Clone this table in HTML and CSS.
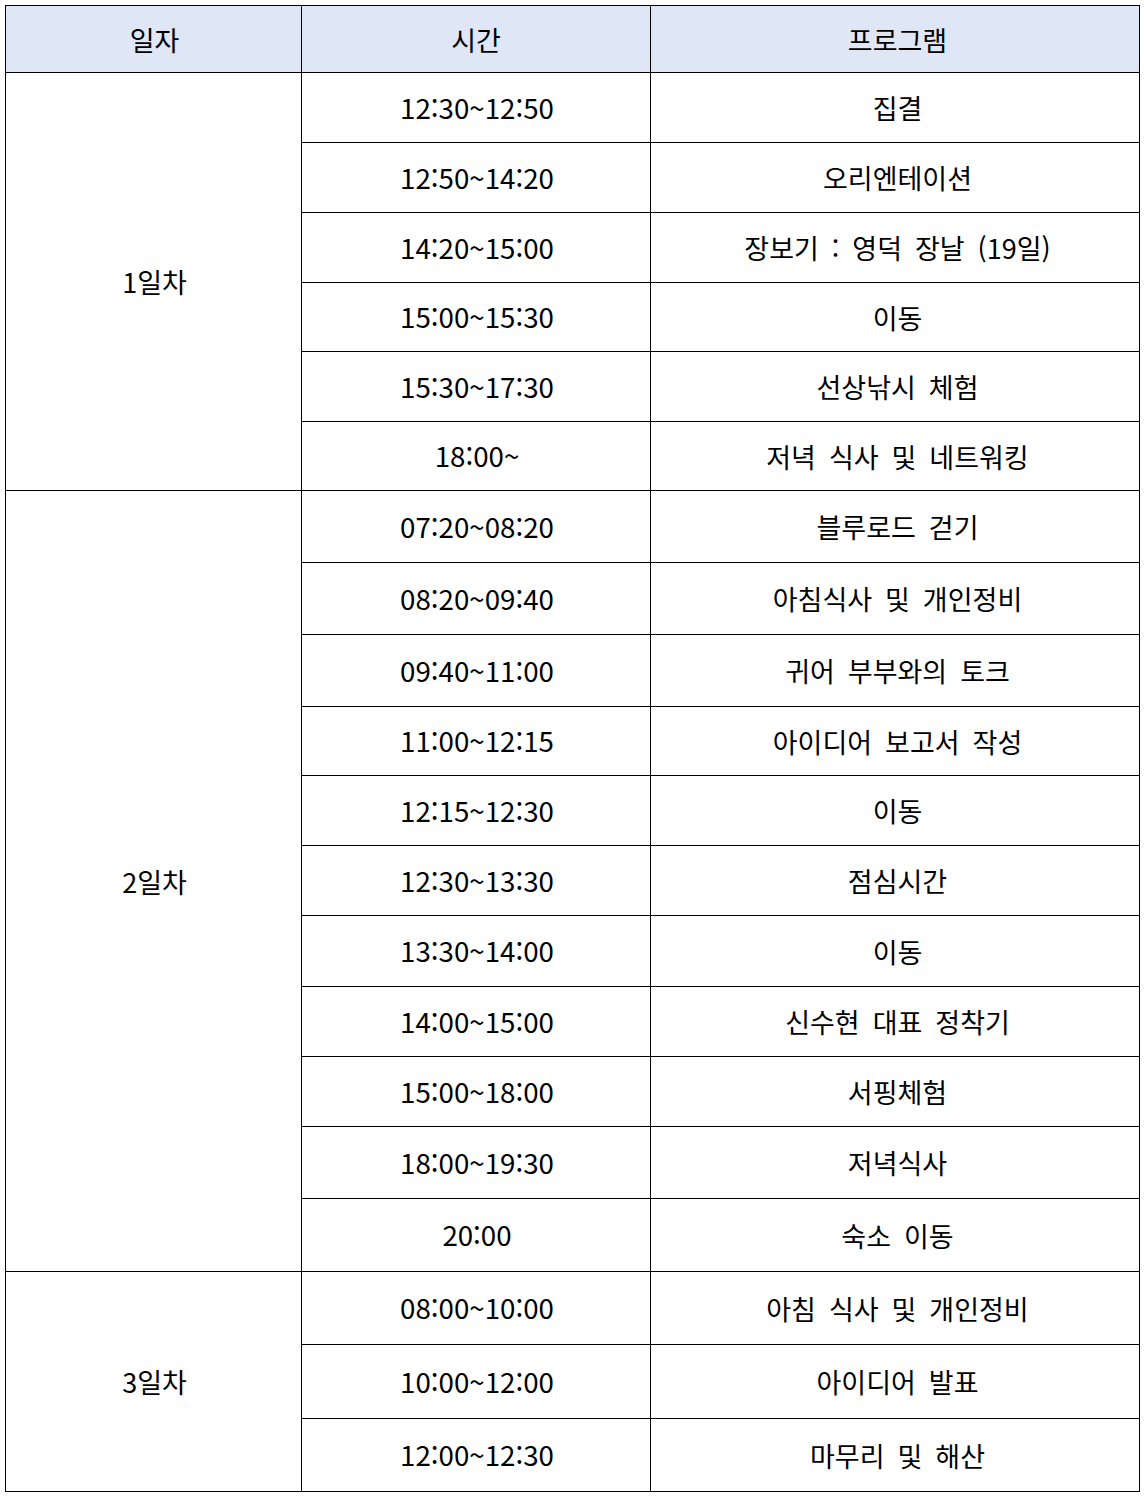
FILE: index.html
```html
<!DOCTYPE html>
<html lang="ko">
<head>
<meta charset="utf-8">
<title>일정표</title>
<link rel="stylesheet" href="styles.css">
</head>
<body>
<table class="schedule">
  <colgroup>
    <col class="c-day">
    <col class="c-time">
    <col class="c-prog">
  </colgroup>
  <thead>
    <tr class="r-head"><th class="day">일자</th><th class="time">시간</th><th class="prog">프로그램</th></tr>
  </thead>
  <tbody>
    <tr class="r70"><td class="day" rowspan="6">1일차</td><td class="time">12:30~12:50</td><td class="prog">집결</td></tr>
    <tr class="r70"><td class="time">12:50~14:20</td><td class="prog">오리엔테이션</td></tr>
    <tr class="r70"><td class="time">14:20~15:00</td><td class="prog">장보기 : 영덕 장날 (19일)</td></tr>
    <tr class="r69"><td class="time">15:00~15:30</td><td class="prog">이동</td></tr>
    <tr class="r70"><td class="time">15:30~17:30</td><td class="prog">선상낚시 체험</td></tr>
    <tr class="r69"><td class="time">18:00~</td><td class="prog">저녁 식사 및 네트워킹</td></tr>

    <tr class="r72"><td class="day" rowspan="11">2일차</td><td class="time">07:20~08:20</td><td class="prog">블루로드 걷기</td></tr>
    <tr class="r72"><td class="time">08:20~09:40</td><td class="prog">아침식사 및 개인정비</td></tr>
    <tr class="r72"><td class="time">09:40~11:00</td><td class="prog">귀어 부부와의 토크</td></tr>
    <tr class="r69"><td class="time">11:00~12:15</td><td class="prog">아이디어 보고서 작성</td></tr>
    <tr class="r70"><td class="time">12:15~12:30</td><td class="prog">이동</td></tr>
    <tr class="r70"><td class="time">12:30~13:30</td><td class="prog">점심시간</td></tr>
    <tr class="r71"><td class="time">13:30~14:00</td><td class="prog">이동</td></tr>
    <tr class="r70"><td class="time">14:00~15:00</td><td class="prog">신수현 대표 정착기</td></tr>
    <tr class="r70"><td class="time">15:00~18:00</td><td class="prog">서핑체험</td></tr>
    <tr class="r72"><td class="time">18:00~19:30</td><td class="prog">저녁식사</td></tr>
    <tr class="r73"><td class="time">20:00</td><td class="prog">숙소 이동</td></tr>

    <tr class="r73"><td class="day" rowspan="3">3일차</td><td class="time">08:00~10:00</td><td class="prog">아침 식사 및 개인정비</td></tr>
    <tr class="r74"><td class="time">10:00~12:00</td><td class="prog">아이디어 발표</td></tr>
    <tr class="r73"><td class="time">12:00~12:30</td><td class="prog">마무리 및 해산</td></tr>
  </tbody>
</table>
</body>
</html>
```

FILE: styles.css
```css
html, body {
  margin: 0;
  padding: 0;
  background: #ffffff;
}
body {
  padding: 5px 0 0 5px;
  font-family: "Noto Sans CJK KR", "Noto Sans", sans-serif;
  color: #000000;
}
.schedule {
  border-collapse: collapse;
  table-layout: fixed;
  width: 1134px;
}
.c-day { width: 296px; }
.c-time { width: 349px; }
.c-prog { width: 489px; }
.schedule th,
.schedule td {
  border: 1.4px solid #000000;
  padding: 0;
  text-align: center;
  vertical-align: middle;
  font-size: 27px;
  font-weight: 400;
  line-height: 1;
  word-spacing: 0.2em;
}
.schedule .day {
  padding-left: 2px;
}
.schedule td.time {
  font-size: 27.7px;
  padding-left: 2px;
}
.schedule .prog {
  padding-left: 5px;
}
.schedule th {
  background: #dfe6f6;
}
.r-head { height: 67px; }
.r69 { height: 69px; }
.r70 { height: 70px; }
.r71 { height: 71px; }
.r72 { height: 72px; }
.r73 { height: 73px; }
.r74 { height: 74px; }
```
